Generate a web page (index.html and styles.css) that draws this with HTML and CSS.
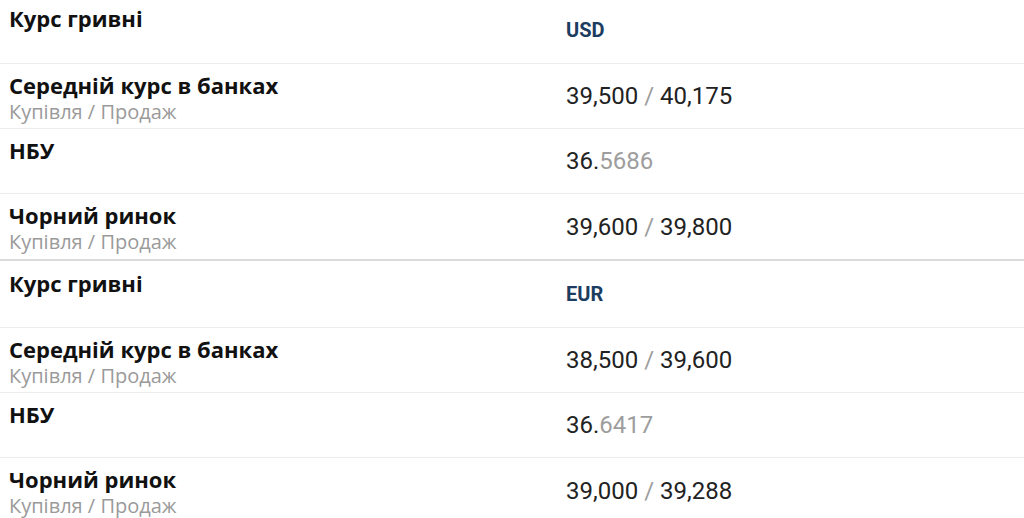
FILE: index.html
```html
<!DOCTYPE html>
<html lang="uk">
<head>
<meta charset="utf-8">
<link rel="stylesheet" href="styles.css">
</head>
<body>
<main class="rates">
  <section class="block">
    <div class="row head">
      <div class="label"><div class="title">Курс гривні</div></div>
      <div class="value"><span class="cur">USD</span></div>
    </div>
    <div class="row">
      <div class="label"><div class="title">Середній курс в банках</div><div class="sub">Купівля / Продаж</div></div>
      <div class="value"><span class="num">39,500 <span class="dim">/</span> 40,175</span></div>
    </div>
    <div class="row">
      <div class="label"><div class="title">НБУ</div></div>
      <div class="value"><span class="num">36.<span class="dim">5686</span></span></div>
    </div>
    <div class="row last">
      <div class="label"><div class="title">Чорний ринок</div><div class="sub">Купівля / Продаж</div></div>
      <div class="value"><span class="num">39,600 <span class="dim">/</span> 39,800</span></div>
    </div>
  </section>
  <section class="block">
    <div class="row head">
      <div class="label"><div class="title">Курс гривні</div></div>
      <div class="value"><span class="cur">EUR</span></div>
    </div>
    <div class="row">
      <div class="label"><div class="title">Середній курс в банках</div><div class="sub">Купівля / Продаж</div></div>
      <div class="value"><span class="num">38,500 <span class="dim">/</span> 39,600</span></div>
    </div>
    <div class="row">
      <div class="label"><div class="title">НБУ</div></div>
      <div class="value"><span class="num">36.<span class="dim">6417</span></span></div>
    </div>
    <div class="row last">
      <div class="label"><div class="title">Чорний ринок</div><div class="sub">Купівля / Продаж</div></div>
      <div class="value"><span class="num">39,000 <span class="dim">/</span> 39,288</span></div>
    </div>
  </section>
</main>
</body>
</html>
```
FILE: styles.css
```css
html, body {
  margin: 0;
  padding: 0;
  background: #fff;
  overflow: hidden;
}
.rates {
  margin-top: -4px;
}
.row {
  display: grid;
  grid-template-columns: 557px 1fr;
  height: 64px;
  border-bottom: 1px solid #ececec;
}
.row.head {
  height: 66px;
}
.block:first-child .row.head {
  height: 67px;
}
.row.last {
  height: 65px;
  border-bottom: 2px solid #dadada;
}
.label {
  padding: 8px 0 0 9px;
  font-family: "Open Sans", "Noto Sans", sans-serif;
}
.row.head .label {
  padding-top: 9px;
}
.title {
  font-size: 22px;
  line-height: 27px;
  font-weight: 700;
  color: #111;
}
.sub {
  font-size: 20px;
  line-height: 26px;
  font-weight: 400;
  color: #9a9a9a;
}
.value {
  display: flex;
  align-items: center;
  padding-left: 9px;
  font-family: Roboto, "Liberation Sans", sans-serif;
}
.cur {
  font-size: 20px;
  font-weight: 700;
  color: #1c3c60;
}
.num {
  font-size: 24px;
  color: #222;
}
.dim {
  color: #9d9d9d;
}
```
